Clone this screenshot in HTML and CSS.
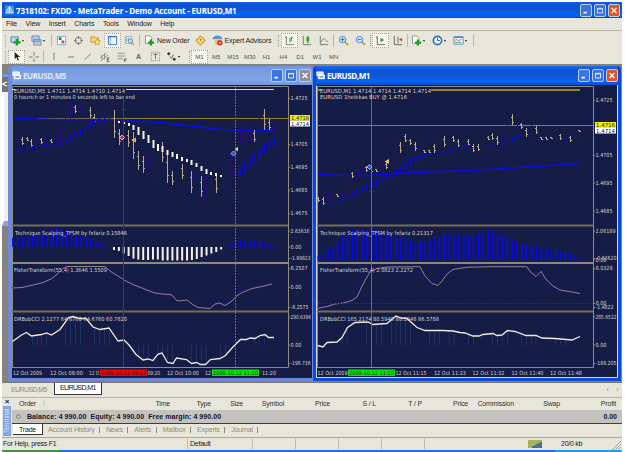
FILE: index.html
```html
<!DOCTYPE html>
<html lang="en">
<head>
    <meta charset="UTF-8">
    <title>MetaTrader - EURUSD,M1</title>
    <link rel="stylesheet" href="styles.css">
</head>
<body>
    <div class="app">
        <div class="titlebar">
            <svg class="logo" viewBox="0 0 10 10"><rect width="10" height="10" fill="#3c8ee6"/><path d="M1 8 5 1l4 7zM3 6h4M5 2v6" fill="none" stroke="#e8f4ff"/></svg>
            <h1>7318102: FXDD - MetaTrader - Demo Account - EURUSD,M1</h1>
            <div class="winbtns">
                <i class="wb"><svg viewBox="0 0 12 12"><path d="M3 8.500h4" stroke="#fff" stroke-width="2"/></svg></i>
                <i class="wb"><svg viewBox="0 0 12 12"><path d="M3 3.500h6v5.500h-6zM3 4h6" fill="none" stroke="#dfeaff"/></svg></i>
                <i class="wb close"><svg viewBox="0 0 12 12"><path d="m3 3 6 6m0-6-6 6" stroke="#fff" stroke-width="1.500"/></svg></i>
            </div>
        </div>

        <div class="menu">
            <span>File</span><span>View</span><span>Insert</span><span>Charts</span><span>Tools</span><span>Window</span><span>Help</span>
        </div>

        <div class="toolbar main-tools">
            <b class="grip"></b>
            <span class="tb drop"><svg viewBox="0 0 12 12"><path d="M1 2h8v6H1z" fill="#b8d4ee" stroke="#5f87b4"/><path d="M7.500 4v7.500M4 8h7.500" stroke="#14a020" stroke-width="2.500"/></svg></span>
            <span class="tb drop second"><svg viewBox="0 0 12 12"><path d="M1 1h8v6H1zM3 5h8v6H3z" fill="#a9c9ec" stroke="#6a90bd"/><path d="M5 10h5" stroke="#e9c86b"/></svg></span>
            <b class="sep"></b>
            <span class="tb"><svg viewBox="0 0 12 12"><path d="M1.500 1.500h9v9h-9z" fill="#f4f9ff" stroke="#7fa6cc"/><path d="M3 4h3" stroke="#189030" stroke-width="3"/><path d="M6 7.500h3" stroke="#c9472c" stroke-width="3"/></svg></span>
            <span class="tb"><svg viewBox="0 0 12 12"><circle cx="6" cy="6" r="3.500" fill="none" stroke="#77756c"/><path d="M6 1v3m0 4v3M1 6h3m4 0h3" stroke="#77756c"/></svg></span>
            <span class="tb"><svg viewBox="0 0 12 12"><path d="M1 2h4l1 1h3v5H1z" fill="#f5d476" stroke="#c49a36"/><path d="m8 4 1 2 2.500.5-2 1.700.5 2.800-2-1.500-2.500 1.500.8-2.800-1.800-1.700 2.500-.5z" fill="#ffe27a" stroke="#bf8c25" stroke-width=".7"/></svg></span>
            <span class="tb on"><svg viewBox="0 0 12 12"><path d="M1.500 1.500h9v9h-9z" fill="#f7fbff" stroke="#2a6fd0"/><path d="M3.500 2v8" stroke="#6ba2e6"/><path d="M1 2h10" stroke="#2a6fd0"/></svg></span>
            <span class="tb"><svg viewBox="0 0 12 12"><path d="M1.500 1.500h7v8h-7z" fill="#eef3f6" stroke="#9aaab8"/><path d="M3 3v5m2-5v4" stroke="#7b96ac"/><circle cx="7" cy="6.500" r="2.300" fill="#c6def2" stroke="#6989ab"/><path d="m9 8.500 2 2.500" stroke="#c79a40" stroke-width="1.500"/></svg></span>
            <b class="sep"></b>
            <span class="tb wide order"><svg viewBox="0 0 12 12"><path d="M1.500 1h5l2 2v6h-7z" fill="#fff" stroke="#86947e"/><path d="M7.500 5v6.500M4.500 8.300h6.500" stroke="#14a020" stroke-width="2.500"/></svg>New Order</span>
            <span class="tb"><svg viewBox="0 0 12 12"><path d="m6 .8 5.200 5.200L6 11.200.8 6z" fill="#f9c83c" stroke="#c98a12"/><path d="M6 3v6M4 6h4" stroke="#fffbe0"/><path d="M6 4v3" stroke="#a06a10"/></svg></span>
            <span class="tb wide experts"><svg viewBox="0 0 12 12"><path d="M1 4q1-3 5-3t5 3z" fill="#5b9ee0" stroke="#3d76b6" stroke-width=".7"/><path d="M3 5h6v5q-3 2-6 0z" fill="#eec171"/><circle cx="8.500" cy="8.500" r="3" fill="#d8382a"/><path d="M7.500 8.500h2" stroke="#fff"/></svg>Expert Advisors</span>
            <b class="grip"></b>
            <span class="tb on"><svg viewBox="0 0 12 12"><path d="M2.500 1v9.500H11M1 3h1.500" fill="none" stroke="#77756c"/><path d="M6.500 3v5M8 2v5m0-4h2" stroke="#259040" fill="none"/></svg></span>
            <span class="tb"><svg viewBox="0 0 12 12"><path d="M2.500 1v9.500H11" fill="none" stroke="#77756c"/><path d="M7.500 1v8" stroke="#186c24"/><path d="M6 2.500h3v4.500H6z" fill="#25a03a"/></svg></span>
            <span class="tb"><svg viewBox="0 0 12 12"><path d="M2.500 1v9.500H11" fill="none" stroke="#77756c"/><path d="M3 8q3-6 5-3t3 2" fill="none" stroke="#4fa060"/></svg></span>
            <b class="sep"></b>
            <span class="tb"><svg viewBox="0 0 12 12"><path d="m7.500 7.500 3.500 3.500" stroke="#c9a03a" stroke-width="2"/><circle cx="5" cy="5" r="3.500" fill="#d3e8fb" stroke="#3f80cf"/><path d="M3 5h4M5 3v4" stroke="#2462b4"/></svg></span>
            <span class="tb"><svg viewBox="0 0 12 12"><path d="m7.500 7.500 3.500 3.500" stroke="#c9a03a" stroke-width="2"/><circle cx="5" cy="5" r="3.500" fill="#d3e8fb" stroke="#3f80cf"/><path d="M3 5h4" stroke="#2462b4"/></svg></span>
            <b class="sep"></b>
            <span class="tb on"><svg viewBox="0 0 12 12"><path d="M2.500 1v9.500H11M1 3h1.500" fill="none" stroke="#66645c"/><path d="m6 3 4 2.500L6 8z" fill="#22973a"/></svg></span>
            <span class="tb"><svg viewBox="0 0 12 12"><path d="M2.500 1v9.500H11M6.500 2v7" fill="none" stroke="#66645c"/><path d="M11 3v4L7.500 5z" fill="#c24426"/></svg></span>
            <b class="sep"></b>
            <span class="tb drop"><svg viewBox="0 0 12 12"><path d="M1.500 1h5l2 2v6h-7z" fill="#fff" stroke="#86947e"/><path d="M7.500 5v6.500M4.500 8.300h6.500" stroke="#14a020" stroke-width="2.500"/></svg></span>
            <span class="tb drop"><svg viewBox="0 0 12 12"><circle cx="6" cy="6" r="4.500" fill="#f3f9ff" stroke="#2a6cc8" stroke-width="1.800"/><path d="M6 3v3h2.500" fill="none" stroke="#34588c"/></svg></span>
            <span class="tb drop"><svg viewBox="0 0 12 12"><path d="M1 2h10v8H1z" fill="#f5faff" stroke="#4f85c6"/><path d="M1 2.500h10" stroke="#4f85c6" stroke-width="1.500"/><path d="m2 6 2-1 2 1 3-1" fill="none" stroke="#c4543c"/><path d="M2 8h7" stroke="#3da05a"/></svg></span>
            <b class="sep"></b>
        </div>

        <div class="toolbar line-tools">
            <b class="grip"></b>
            <span class="tb on"><svg viewBox="0 0 12 12"><path d="M4 1v8l2-2 1.500 3.500 1.200-.6L7.200 6.500H10z" fill="#222"/></svg></span>
            <span class="tb cross"><svg viewBox="0 0 12 12"><path d="M6.500 1v4m0 3v4M1 6.500h4m3 0h4" stroke="#77756c"/></svg></span>
            <b class="sep"></b>
            <span class="tb"><svg viewBox="0 0 12 12"><path d="M6.500 2v8" stroke="#77756c"/></svg></span>
            <span class="tb"><svg viewBox="0 0 12 12"><path d="M3 6.500h7" stroke="#77756c"/></svg></span>
            <span class="tb"><svg viewBox="0 0 12 12"><path d="m3 9.500 6.500-6.500" stroke="#77756c"/></svg></span>
            <span class="tb"><svg viewBox="0 0 12 12"><path d="m1 8 7-6M2 11l8-7M3 4v5m3-6v6" stroke="#77756c" stroke-width=".8"/><path d="M11.500 7.500H9v4h2.500M9 9.500h2" fill="none" stroke="#444" stroke-width=".8"/></svg></span>
            <span class="tb"><svg viewBox="0 0 12 12"><path d="M2 2.500h8M2 5.500h8M2 8.500h6" stroke="#77756c" stroke-dasharray="2 .6"/><path d="M11.500 8.500H9.500V12m0-2h2" fill="none" stroke="#444" stroke-width=".8"/></svg></span>
            <span class="tb letter">A</span>
            <span class="tb"><svg viewBox="0 0 12 12"><path d="M1.500 1.500h9v9h-9z" fill="none" stroke="#8b897f" stroke-dasharray="1 1"/><path d="M3.500 3.500h5M6 3.500v5" stroke="#66645c"/></svg></span>
            <span class="tb drop"><svg viewBox="0 0 12 12"><path d="m1 3 2-2 2 2-2 2zM7 9l2-2 2 2-2 2z" fill="#333"/><path d="m4 6 2 2 2-4" fill="none" stroke="#555"/></svg></span>
            <b class="grip frames"></b>
            <span class="tf on">M1</span><span class="tf">M5</span><span class="tf">M15</span><span class="tf">M30</span><span class="tf">H1</span><span class="tf">H4</span><span class="tf">D1</span><span class="tf">W1</span><span class="tf">MN</span>
        </div>

        <div class="workspace">
            <div class="sliver">
                <div class="sliver-head">&lt;</div>
                <div class="sliver-body"></div>
            </div>

            <div class="window inactive">
                <div class="window-head">
                    <svg class="doc" viewBox="0 0 10 10"><path d="M1 1h7v4H1zM2.500 4.500h7v4h-7z" fill="#dce9ff" stroke="#fff"/><path d="M4 6.500h4" stroke="#3a63b8"/></svg>
                    <h2>EURUSD,M5</h2>
                    <div class="winbtns">
                        <i class="wb"><svg viewBox="0 0 12 12"><path d="M3 8.500h4" stroke="#fff" stroke-width="2"/></svg></i>
                        <i class="wb"><svg viewBox="0 0 12 12"><path d="M3 3.500h6v5.500h-6zM3 4h6" fill="none" stroke="#fff"/></svg></i>
                        <i class="wb gray"><svg viewBox="0 0 12 12"><path d="m3 3 6 6m0-6-6 6" stroke="#fff" stroke-width="1.500"/></svg></i>
                    </div>
                </div>
                <svg class="chart" id="chart-m5" viewBox="12 84 300 293" width="300" height="293"></svg>
            </div>

            <div class="window active">
                <div class="window-head">
                    <svg class="doc" viewBox="0 0 10 10"><path d="M1 1h7v4H1zM2.500 4.500h7v4h-7z" fill="#dce9ff" stroke="#fff"/><path d="M4 6.500h4" stroke="#3a63b8"/></svg>
                    <h2>EURUSD,M1</h2>
                    <div class="winbtns">
                        <i class="wb"><svg viewBox="0 0 12 12"><path d="M3 8.500h4" stroke="#fff" stroke-width="2"/></svg></i>
                        <i class="wb"><svg viewBox="0 0 12 12"><path d="M3 3.500h6v5.500h-6zM3 4h6" fill="none" stroke="#fff"/></svg></i>
                        <i class="wb close"><svg viewBox="0 0 12 12"><path d="m3 3 6 6m0-6-6 6" stroke="#fff" stroke-width="1.500"/></svg></i>
                    </div>
                </div>
                <svg class="chart" id="chart-m1" viewBox="316 84 302 293" width="302" height="293"></svg>
            </div>
        </div>

        <div class="doc-tabs">
            <span>EURUSD,M5</span>
            <span class="current">EURUSD,M1</span>
            <div class="scroll"><i>‹</i><i>›</i></div>
        </div>

        <div class="terminal">
            <div class="side">
                <b>×</b>
                <span>Terminal</span>
            </div>
            <div class="panel">
                <div class="cols">
                    <span>Order <em>/</em></span><span>Time</span><span>Type</span><span>Size</span><span>Symbol</span><span>Price</span><span>S / L</span><span>T / P</span><span>Price</span><span>Commission</span><span>Swap</span><span>Profit</span>
                </div>
                <div class="balance">
                    <i></i>
                    <span>Balance: 4 990.00&nbsp; Equity: 4 990.00&nbsp; Free margin: 4 990.00</span>
                    <strong>0.00</strong>
                </div>
                <div class="tabs">
                    <span class="current">Trade</span><span>Account History</span><span>News</span><span>Alerts</span><span>Mailbox</span><span>Experts</span><span>Journal</span>
                </div>
            </div>
        </div>

        <div class="status">
            <span>For Help, press F1</span>
            <span>Default</span>
            <span></span>
            <span></span>
            <span></span>
            <span></span>
            <span></span>
            <span class="net">
                <svg viewBox="0 0 15 8"><path d="M1 0v8M3 0v8M5 0v8M7 0v8M9 0v8M11 0v8M13 0v8" stroke="#7f9a1c" stroke-width="1.300"/><path d="M5 6v2m2-3v3m2-4v4m2-5v5m2-6v6" stroke="#1d4f9c" stroke-width="1.300"/></svg>
                20/0 kb
            </span>
            <svg class="size-grip" viewBox="0 0 9 9"><path d="m0 9 9-9M3 9l6-6M6 9l3-3" stroke="#a5a397"/></svg>
        </div>
        <div class="taskbar"><i></i><b></b></div>
    </div>
    <script src="charts.js"></script>
</body>
</html>
```
FILE: styles.css
```css
body {
    margin: 0;
    background: #fdfdfd;
    font-family: "Liberation Sans", Arial, sans-serif;
    font-size: 7px;
    color: #222;
    overflow: hidden;
}
.app {
    width: 620px;
    height: 450px;
    margin: 2px 3px 0 2px;
    background: #e8e6da;
    display: flex;
    flex-direction: column;
}
h1, h2 {
    margin: 0;
    color: white;
    white-space: nowrap;
    font-weight: bold;
    flex: 1;
}
i, em {
    font-style: normal;
}

/* title bars */
.titlebar {
    height: 16px;
    display: flex;
    align-items: center;
    padding: 0 2px 0 3px;
    background: linear-gradient(#1763e8, #0b50cf 20%, #1058d8 55%, #0066fa 75%, #0a5cec 90%, #0843b8);
}
.logo {
    width: 9px;
    height: 10px;
    margin-right: 2px;
}
.titlebar h1 {
    font-size: 8px;
    font-family: "Open Sans", sans-serif;
    letter-spacing: -0.18px;
}
.winbtns {
    display: flex;
    gap: 2px;
}
.wb {
    width: 10px;
    height: 11px;
    border: 1px solid #b9cff8;
    border-radius: 2px;
    background: #3a74e0;
    display: flex;
}
.wb svg {
    width: 10px;
    height: 11px;
}
.wb.close {
    background: #e2552b;
}
.wb.gray {
    background: #8d8d94;
}

/* menu and toolbars */
.menu {
    height: 12px;
    line-height: 12px;
    display: flex;
    gap: 8.5px;
    padding-left: 4px;
    letter-spacing: -0.08px;
    border-bottom: 1px solid #b4b2a6;
}
.toolbar {
    display: flex;
    align-items: center;
    font-size: 7px;
    white-space: nowrap;
}
.main-tools {
    height: 17px;
    margin-top: 1px;
}
.line-tools {
    height: 15px;
}
.grip {
    width: 1px;
    height: 12px;
    margin: 0 1px 0 3px;
    border-left: 1px dotted #a6a498;
}
.sep {
    width: 1px;
    height: 13px;
    margin: 0 1px;
    background: #bdbbaf;
}
.tb {
    width: 17px;
    height: 15px;
    box-sizing: border-box;
    display: flex;
    align-items: center;
    justify-content: center;
}
.tb svg {
    width: 11px;
    height: 11px;
    flex: none;
}
.tb.on, .tf.on {
    background: #f6f5ee;
    border: 1px dotted #a5a398;
}
.tb.drop {
    width: 21px;
    justify-content: flex-start;
    padding-left: 2px;
}
.tb.drop::after {
    content: "";
    margin-left: 1px;
    border: 1.5px solid transparent;
    border-top: 2px solid #222;
    border-bottom: 0;
}
.tb.wide {
    justify-content: flex-start;
    gap: 2px;
    padding-left: 3px;
}
.order {
    width: 50.5px;
    letter-spacing: -0.15px;
}
.experts {
    width: 66.5px;
    letter-spacing: -0.12px;
}
.line-tools .tb, .tf {
    height: 14px;
}
.letter {
    font-weight: bold;
    color: #66645c;
}
.frames {
    margin: 0 0 0 4px;
}
.tf {
    width: 16.8px;
    box-sizing: border-box;
    font-size: 6px;
    color: #55534a;
    display: flex;
    align-items: center;
    justify-content: center;
}

/* chart windows */
.workspace {
    height: 318px;
    box-sizing: border-box;
    padding-top: 2px;
    background: #85837a;
    display: flex;
}
.sliver {
    width: 6px;
    padding-top: 8px;
}
.sliver-head {
    height: 18px;
    background: #77756e;
    border-top: 3px solid #7b97e6;
    box-sizing: border-box;
    color: white;
    font-size: 9px;
    font-weight: bold;
    line-height: 15px;
}
.sliver-body {
    height: 129px;
    background: #f0efe7;
    border-bottom: 5px solid #8aa2ea;
    border-left: 2px solid #fff;
}
.window {
    height: 315px;
    box-sizing: border-box;
    border-radius: 4px 4px 0 0;
    overflow: hidden;
}
.inactive {
    width: 305px;
    border: solid #7088dc;
    border-width: 0 1px 3px 4px;
    background: #7088dc;
}
.active {
    width: 308px;
    border: solid #0a4ad8;
    border-width: 0 3px 3px 3px;
    background: #0a4ad8;
}
.window-head {
    height: 19px;
    display: flex;
    align-items: center;
    background: linear-gradient(#6f97e8, #7b9de0 30%, #80a5e8 75%, #7693dc);
}
.inactive .winbtns {
    margin-right: 1px;
}
.active .window-head {
    background: linear-gradient(#1a6af0, #0d52d4 25%, #0f5ade 60%, #0366fa 80%, #0a4cc8);
}
.doc {
    width: 9px;
    height: 9px;
    margin-right: 2px;
}
.window h2 {
    font-size: 8px;
    font-family: "Open Sans", sans-serif;
    letter-spacing: -0.4px;
}
.inactive h2 {
    color: #dfe8fb;
}
.chart {
    display: block;
    font-family: "DejaVu Sans", sans-serif;
    font-size: 5.6px;
}
.bg { fill: #151c46; }
.frame { stroke: #8e8a80; fill: none; }
.split { stroke: #8e8a80; stroke-width: 2; }
.split.hatch { stroke: #776f50; }
.label { fill: #d6d4ca; }
.dark { fill: #1c1c10; }
.beige { stroke: #b3aa92; fill: none; }
.purple { stroke: #280a85; fill: none; }
.box-blue { stroke: #0808fa; stroke-width: 1.8; }
.box-white { stroke: #f6f3ea; stroke-width: 2; }
.dim { stroke: #1b3263; }
.ma { stroke: #0a0af0; stroke-width: 1.3; fill: none; }
.fisher { stroke: #aaa491; fill: none; stroke-width: .8; }
.cci { stroke: #eeece2; stroke-width: 1.3; fill: none; }
.price { stroke: #8f861f; }
.top-line { stroke: #f8f208; }
.active .top-line { stroke: #b8b20c; stroke-width: 1.6; }
.mark-red { stroke: #a00c58; }
.mark-green { stroke: #14a81c; }
.dashed { stroke-dasharray: 2 1; }

/* tabs under the charts */
.doc-tabs {
    height: 13px;
    display: flex;
    align-items: center;
    padding-left: 9px;
    border-top: 1px solid #77756c;
    box-sizing: border-box;
    letter-spacing: -0.6px;
    color: #8d8b80;
}
.doc-tabs .current {
    width: 48px;
    height: 12px;
    box-sizing: border-box;
    margin-left: 7px;
    line-height: 10px;
    text-align: center;
    background: white;
    border: 1px solid #333;
    border-top: 0;
    color: #111;
}
.scroll {
    margin-left: auto;
    padding-right: 4px;
    display: flex;
    gap: 8px;
}

/* terminal */
.terminal {
    height: 41px;
    margin-top: 2px;
    display: flex;
    border-top: 1px solid #b5b3a8;
    border-bottom: 1px solid #a9a79c;
    box-sizing: border-box;
}
.side {
    width: 10px;
    display: flex;
    flex-direction: column;
    align-items: center;
}
.side b {
    height: 8px;
    line-height: 7px;
    font-size: 8px;
}
.side span {
    width: 8px;
    height: 30px;
    background: #85a5e4;
    color: #d9e4fa;
    writing-mode: vertical-rl;
    transform: rotate(180deg);
    line-height: 8px;
    text-align: center;
    font-size: 6.5px;
}
.panel {
    flex: 1;
}
.cols {
    height: 12px;
    line-height: 12px;
    padding-left: 7px;
    display: grid;
    grid-template-columns: 106px 45px 41px 32px 41px repeat(6, 46px) 56px;
    text-align: right;
    color: #33322c;
    letter-spacing: -0.2px;
}
.cols span:first-child {
    text-align: left;
}
.cols em {
    margin-left: 5px;
    color: #aaa89c;
}
.balance {
    height: 13px;
    display: flex;
    align-items: center;
    padding: 0 5px 0 4px;
    background: #c3c2bc;
    border-bottom: 1px solid #3b3950;
    font-weight: bold;
    color: #15152c;
}
.balance i {
    width: 3px;
    height: 3px;
    border: 1px solid #85837a;
    border-radius: 50%;
    margin-right: 6px;
}
.balance span {
    flex: 1;
    letter-spacing: 0.06px;
}
.tabs {
    display: flex;
    height: 11px;
    line-height: 11px;
    padding-left: 1px;
    color: #8d8b80;
    letter-spacing: -0.17px;
}
.tabs span {
    position: relative;
    padding: 0 5.5px 0 5px;
    border-right: 1px solid transparent;
}
.tabs span:not(.current)::after {
    content: "";
    position: absolute;
    right: 0;
    top: 3px;
    height: 6px;
    border-right: 1px solid #8d8b80;
}
.tabs .current {
    width: 30px;
    box-sizing: border-box;
    padding: 0;
    text-align: center;
    background: white;
    border-right: 1px solid #333;
    border-bottom: 1px solid #333;
    color: #111;
}

/* status bar */
.status {
    flex: 1;
    display: grid;
    grid-template-columns: 184px 65px 43px 43px 43px 43px 43px 1fr 10px;
    align-items: center;
    padding-left: 1px;
}
.status span {
    height: 10px;
    line-height: 10px;
    letter-spacing: -0.25px;
}
.status span + span {
    border-left: 1px solid #bdbbaf;
    padding-left: 2px;
}
.status .net {
    display: flex;
    gap: 18px;
    padding-left: 60px;
    border-color: transparent;
}
.net svg {
    width: 15px;
    height: 8px;
    margin-top: 1px;
}
.size-grip {
    width: 9px;
    height: 9px;
    align-self: end;
}
.taskbar {
    height: 2px;
    display: flex;
    background: #1b70ec;
}
.taskbar i {
    width: 57px;
    background: #3c9a3c;
}
.taskbar b {
    width: 67px;
    margin-left: auto;
    background: #189ff0;
}
```
FILE: charts.js
```js
const NS = "http://www.w3.org/2000/svg";

function add(svg, tag, attrs, text) {
    const el = document.createElementNS(NS, tag);
    for (const key in attrs) el.setAttribute(key, attrs[key]);
    if (text) el.textContent = text;
    svg.appendChild(el);
    return el;
}

function line(svg, cls, x1, y1, x2, y2) {
    add(svg, "line", { class: cls, x1, y1, x2, y2 });
}

// bars: flat list of x, top, bottom
function bars(svg, cls, list) {
    let d = "";
    for (let i = 0; i < list.length; i += 3) d += `M${list[i]} ${list[i + 1]}V${list[i + 2]}`;
    add(svg, "path", { class: cls, d });
}

// bars with open/close ticks
function ticks(svg, cls, list) {
    let d = "";
    for (let i = 0; i < list.length; i += 3) {
        const x = Math.floor(list[i]) + 0.5;
        const a = list[i + 1];
        const b = list[i + 2];
        const open = Math.floor(a + (b - a) * 0.3) + 0.5;
        const close = Math.floor(b - (b - a) * 0.25) + 0.5;
        d += `M${x} ${a}V${b}M${x - 1.5} ${open}h1M${x + 0.5} ${close}h1`;
    }
    add(svg, "path", { class: cls, d });
}

function poly(svg, cls, points, dx = 0) {
    add(svg, "polyline", { class: cls, points, transform: `translate(${dx} 0)` });
}

function label(svg, x, y, width, text, cls = "label") {
    add(svg, "text", { class: cls, x, y, textLength: width, lengthAdjust: "spacingAndGlyphs" }, text);
}

function base(svg, left, right, end) {
    add(svg, "rect", { class: "bg", x: left - 1, y: 84, width: end - left + 1, height: 293 });
    add(svg, "path", { class: "frame", d: `M${left + 0.5} 366V85.500H${right + 0.5}V366.500H${left}` });
    line(svg, "split hatch", left, 224.5, right, 224.5);
    line(svg, "split", left, 262, right, 262);
    line(svg, "split hatch", left, 310.5, right, 310.5);
}

function scale(svg, right, rows) {
    rows.forEach(([y, text, width]) => {
        line(svg, "frame", right, y + 0.5, right + 2, y + 0.5);
        label(svg, right + 2.500, y + 2, width || 17, text);
    });
}

function tag(svg, x, y, w, h, fill, text) {
    add(svg, "rect", { x, y, width: w, height: h, fill });
    label(svg, x + 1, y + h - 1, w - 2, text, "dark");
}

// EURUSD, M5
const m5 = document.getElementById("chart-m5");
base(m5, 12, 288, 312);
bars(m5, "dim", [32.5,335,344, 37.5,334,344, 41.5,334,344, 46.5,332,344, 65.5,320,344, 70.5,318,344, 75.5,317,344, 80.5,318,344, 94.5,327,344, 99.5,328,344, 104.5,328,344, 109.5,327,344, 134,344,352, 138.5,344,355, 143.5,344,358, 148.5,344,357, 158,344,352, 162.5,344,352, 167.5,344,359, 172.5,344,359, 191.5,344,360, 196.5,344,360, 201.5,344,361, 206,344,361, 220.5,344,356, 225.5,344,354, 254.5,337,344, 259.5,335,344, 264.5,334,344]);
line(m5, "top-line", 12, 88.5, 15, 88.5);
line(m5, "top-line", 126, 88.5, 274, 88.5);
line(m5, "price", 37, 117.5, 288, 117.5);
poly(m5, "ma", "13,117.5 60,118.500 120,118.500 160,121.500 222,128.500 250,129.700 274,129");
ticks(m5, "purple", [17.5,138,149, 37,137,144, 46.5,136,145, 56.500,134,142, 60.5,127,143, 65.5,117,131, 70.5,103,118, 80.5,104,111, 85.5,102,110, 99.5,116,122, 104.5,113,122, 109.5,107,119, 148.5,157,169, 153,164,178, 157.5,155,168, 177.5,160,174, 196.5,170,180, 206.500,172,198, 211.5,174,187, 225.5,174,188, 230.5,155,177, 235.5,149,157, 240.5,125,143, 245.5,130,142, 250,129,142, 259.5,114,138, 274.5,122,131]);
ticks(m5, "beige", [22.5,136,144, 27.5,136,140, 31.5,138,146, 41.5,137,143, 51,138,142, 75.5,104,112, 90,106,117, 94.5,113,123, 114.5,109,137, 119,128,144, 128.5,129,146, 133.500,131,158, 138.500,150,169, 143.5,155,172, 162.5,141,161, 167.500,152,182, 172.5,170,184, 182,163,178, 191.5,170,192, 201.5,175,196, 216,172,192, 254.5,129,141, 264.5,108,129, 269.5,118,129]);
bars(m5, "box-blue", [17,149,151, 22,146.5,150, 27,146,148, 32,145.5,148, 36.5,145,147, 41.5,144.5,146, 46.5,143.5,146, 51,143,145, 56,142,144.5, 61,140,144, 66,138,142, 70.5,134,140, 75.5,131,137, 80.5,128,134, 85.5,124,131, 90,121,127, 94.5,118,123, 99,119,122, 104,119,121, 235.5,172,175, 240,167,174, 245,161,172, 250,157,165.5, 254.5,152,161, 259.7,147,156, 264.300,143,152, 269.500,139,148, 274.500,137,144]);
bars(m5, "box-white", [119,120,122, 124,121,123, 129,122,125, 133.5,124,129, 138.5,126,134, 143.5,130,138, 148.5,134,142, 153.5,139,147, 158,143,150, 162.5,145,151, 167.5,149,154, 172.5,151,156, 177,153,158, 182,156,160, 187,158,161, 191.5,159,164, 196.5,162,166, 201.5,165,170, 206.5,168,173, 211,171,174, 216,172,175, 221,174,176]);

const up = [237,236.5,236,235,234,233,232.5,231.5,229,227.5,227.5,229.5,231.5,235,235,236.5,237.5,240.5,241.5,244];
bars(m5, "box-blue", up.flatMap((y, i) => [13 + i * 4.87, y, 245.7]));
const down = [249,250,252.5,255,257.5,258.5,259,259,258.5,258.5,259.5,259.5,259.5,259.5,259.5,259.5,259,258,256,254.5,252.5,251,248.5];
bars(m5, "box-white", down.flatMap((y, i) => [114 + i * 4.87, 246, y]));
bars(m5, "box-blue", [231,243,246, 235.5,241,246, 240.5,239.5,246, 245,240,246, 250,239.5,246, 255,239.5,246, 259.5,241,246, 264.5,242,246, 269,243.5,246, 274,245,246]);

const fisherM5 = "13,287 22,286.500 33,284 43,281.500 52,277.500 58,272.500 63,267.500 67,265.500 105,265.500 110,270 118,275 125,279.500 133,283.500 147,289 155,292 162,293 170,293.500 173,295 177,300 187,299 192,303 198,306.500 210,307.500 215,303 220,302 225,304.500 232,300 236,295.500 242,291.500 252,287.500 262,285.500 272,283";
poly(m5, "purple", fisherM5, -3);
poly(m5, "fisher", fisherM5);
poly(m5, "cci", "12.5,340.500 21.5,334 26.5,331.500 31.5,335 41.500,333.500 46.5,332 51.5,334 60,328.500 68.500,316.500 73,315.500 80,317.500 86,317.500 93,326 100,328.500 109,327 118,340 124,339 129,344 136,353.500 143,359 148,358 153,359.500 158,353 162,352 167.500,361.500 173,362.500 176.500,357 186.500,358.500 191.500,362.500 196.500,361.500 200.500,363.500 205.500,363.500 210.500,358.500 220,357.500 225.500,354.500 231.500,347.500 240.500,338.500 246.500,338.500 250,337 255,337.500 260,334.500 265,333.500 268.500,336.500 274,336.500");
line(m5, "mark-red", 123.5, 96, 123.5, 366);
line(m5, "mark-green dashed", 235.5, 86, 235.5, 366);
add(m5, "path", { d: "M122 108.500h4", stroke: "#b01010" });
add(m5, "path", { d: "m122 134 2.500 2.500L122 139l-2.500-2.500z", fill: "#e02020", stroke: "#fff", "stroke-width": 0.7 });
add(m5, "path", { d: "m131 139 5-2.500v5z", fill: "#f0b040" });
add(m5, "path", { d: "m233.500 150 2.500 2.500-2.500 2.500-2.500-2.500z", fill: "#2850e0", stroke: "#cfd8ff", "stroke-width": 0.7 });
add(m5, "path", { d: "m235 148.500 3-3v5z", fill: "#f0d080" });
label(m5, 14, 92, 111, "EURUSD,M5  1.4711 1.4714 1.4710 1.4714");
label(m5, 14, 98.300, 121, "0 hours:h or 1 minutes 0 seconds left to bar end");
label(m5, 15, 233.500, 112, "Technique Scalping_TFSM by fxfariz 0.15846");
label(m5, 14, 271, 93, "FisherTransform(55,4) 1.3646 1.5509");
label(m5, 14, 319.500, 113, "DRBobCCI 2.1277 64.6760 64.6760 60.7820");
scale(m5, 288, [[97, "1.4725"], [143, "1.4705"], [166, "1.4695"], [189, "1.4685"], [212, "1.4675"], [229.5, "2.63616", 19], [245.5, "0.00", 11], [257, "-1.99823", 20], [267, "8.2507"], [286, "0.00", 11], [306, "-8.2575", 18], [315.5, "290.6396", 20.5], [343.5, "0.00", 11], [362, "-198.736", 20]]);
tag(m5, 290, 114, 20, 5.5, "#f6f000", "1.4716");
tag(m5, 290, 119.5, 20, 6, "#fff", "1.4714");
label(m5, 13, 373.500, 29, "12 Oct 2009");
label(m5, 50, 373.500, 33, "12 Oct 08:00");
label(m5, 89, 373.500, 10, "12 O");
tag(m5, 100, 368.500, 47, 6.5, "#f00505", "2009.10.12 09:15");
label(m5, 147.500, 373.500, 12.500, "09:20");
label(m5, 167, 373.500, 32, "12 Oct 10:00");
label(m5, 205, 373.500, 6, "12");
tag(m5, 212, 368.500, 47, 6.5, "#08e808", "2009.10.12 11:10");
label(m5, 262, 373.500, 14, "11:20");

// EURUSD, M1
const m1 = document.getElementById("chart-m1");
base(m1, 317, 593, 618);
bars(m1, "dim", [342,338,344, 347,326,344, 366.5,321,344, 371.5,323,344, 376.5,324,344, 381.5,323,344, 391.5,318,344, 396,315,344, 400.5,317,344, 405.5,318,344, 410.5,323,344, 429.5,330,344, 434.5,330,344, 439.5,330,344, 449,330,344, 454,330,344, 468.5,333,344, 473.5,335,344, 492.5,333,344, 497.5,335,344, 502,335,344, 507.5,330,344, 521.5,333,344, 526.5,335,344, 531.5,335,344, 536,335,344, 555.5,338,344, 560.5,338,344, 565.5,339,344]);
line(m1, "top-line", 318, 89, 321, 89);
line(m1, "top-line", 431, 89, 580, 89);
line(m1, "price", 318, 124.5, 593, 124.5);
poly(m1, "ma", "318,173.500 340,174.300 370,174.500 400,172 470,169.500 520,166.500 580,162.500");
ticks(m1, "purple", [328,191,199, 333,194,200, 342.5,191,198, 347.5,175,190, 357,168,173, 362,165,171, 381.5,160,172, 391,155,163, 395.5,135,155, 419.5,142,152, 439.5,138,152, 449.5,138,146, 463.5,136,146, 483.5,138,146, 502.5,132,149, 507.5,119,129, 517,122,127, 531.5,124,137, 555.5,134,140, 565.5,136,140, 575.5,130,141]);
ticks(m1, "beige", [318.5,196,201, 323.5,196,204, 337.5,193,196, 352.5,171,177, 366.5,165,171, 371.5,166,172, 376.5,168,171, 386.5,161,168, 400.5,141,152, 405.5,133,141, 410.5,138,144, 415.5,141,150, 424.5,149,152, 429.5,149,152, 434.5,143,152, 444.5,135,146, 453.5,135,141, 458.5,138,146, 468.5,138,145, 473.5,143,151, 478.5,143,150, 488,135,139, 492.5,132,139, 497.5,135,144, 512,113,124, 521.5,122,128, 526.5,127,136, 536,125,133, 541,136,139, 546,136,139, 551,136,138, 560.5,133,139, 570.5,135,141, 579.5,129,131]);
bars(m1, "box-blue", [328,202.5,203.5, 333,201.5,202.5, 338,199,201, 342.5,197.5,200, 347.5,195.5,199, 352.5,193.5,197, 357,189,194, 362,186,191, 367,183,189, 371.5,181,186, 376.5,179,184, 381.5,177,181, 386.5,175,179, 391.500,173,177, 396.5,169,174, 401,166,171, 405.5,161,169, 410.5,157,165, 415.5,155,161, 420,154,158, 424.5,153,156, 429.5,153,155, 434.5,152,154, 439.5,151.5,153, 444.5,151,153, 449.5,149,151.5, 454,148,150, 458.5,147,149, 463.5,146,148, 468.5,144,146.5, 488,144,145.5, 492.5,143.5,145, 507.5,139,141, 512,137,141, 517,134,138, 521.5,133.5,135.500, 536,134,135, 565.5,137,139]);

const tops = [105,95,85,78,62,45,35,25,23,25,27,27,30,32,35,40,47,48,52,58,62,62,60,54,48,42,40,41,41,41,42,45,42,36,31,28,33,40,44,47,54,60,66,70,72,76,80,82,84,86,90,94,96,103,111];
bars(m1, "box-blue", tops.flatMap((t, i) => [318.4 + i * 4.845, 220 + t / 3, 259.3]));

const fisherM1 = "317,307.500 327,305.500 335,303 343,302 352,299.500 357,296 360,289.500 365,279.500 370,271 377,267.500 388,266 420,265.700 425,275 432,282.500 438,284.500 442,280 447,273 453,268.500 466,266.300 490,265.700 527,265.700 530,270.500 536,275.500 541,270.500 546,278.500 553,285 560,289 572,291 580,292.500";
poly(m1, "purple", fisherM1, -4);
poly(m1, "fisher", fisherM1);
poly(m1, "cci", "317.5,344.500 323,346 327,341.500 337,341 342,336.500 347.500,326.500 355,321.500 368,321 373,323.500 387,322.500 391,319 396,315 401,317 407,317.500 417,326.500 425,329.500 443,329.500 453,330 460,331.500 465,332 473,335 479,335 483,333.500 493,332.500 497,334.500 502,334 507.500,329.500 515,330.500 526,334.500 536,334.500 542,337 555,337.500 572,339 580,335.500");
line(m1, "dim dashed", 318, 302.5, 593, 302.5);
line(m1, "mark-green", 371.5, 86, 371.5, 366);
add(m1, "path", { d: "M369.500 190.500h4", stroke: "#b01010" });
add(m1, "path", { d: "m369.500 163.500 2.500 2.500-2.500 2.500-2.500-2.500z", fill: "#2850e0", stroke: "#cfd8ff", "stroke-width": 0.7 });
add(m1, "path", { d: "m384.500 160.500 4.500-2.500v5z", fill: "#f0c080" });
label(m1, 320, 92, 111, "EURUSD,M1  1.4714 1.4714 1.4714 1.4714");
label(m1, 320, 98.300, 87, "EURUSD 1heikkas BUY @ 1.4716");
label(m1, 320, 233.500, 113, "Technique Scalping_TFSM by fxfariz 0.21317");
label(m1, 320, 271, 93, "FisherTransform(55,4) 2.0823 2.2272");
label(m1, 320, 319.500, 119, "DRBobCCI 165.2174 80.5948 80.5948 86.5788");
scale(m1, 593, [[99, "1.4725"], [154, "1.4705"], [181.5, "1.4695"], [209.5, "1.4685"], [229.5, "2.06189", 20], [258.5, "0.00", 11], [257, "-0.63620", 21], [267, "8.0329"], [302, "0.00", 11], [306, "-1.4822", 18], [315.500, "285.6522", 21], [343.5, "0.00", 11], [362, "-188.205", 21]]);
tag(m1, 595, 121, 21, 6, "#f6f000", "1.4716");
tag(m1, 595, 127, 21, 5.5, "#fff", "1.4714");
label(m1, 317.500, 373.500, 30, "12 Oct 2009");
tag(m1, 348, 368.500, 47, 6.5, "#08e808", "2009.10.12 11:10");
label(m1, 395.500, 373.500, 31, "12 Oct 11:15");
label(m1, 434, 373.500, 32, "12 Oct 11:23");
label(m1, 472.500, 373.500, 32, "12 Oct 11:32");
label(m1, 511.500, 373.500, 32, "12 Oct 11:40");
label(m1, 550, 373.500, 32, "12 Oct 11:48");
add(m1, "path", { d: "M316.500 377V84.500M316 376.500h301.500V84", fill: "none", stroke: "#d8d6cc" });
```
